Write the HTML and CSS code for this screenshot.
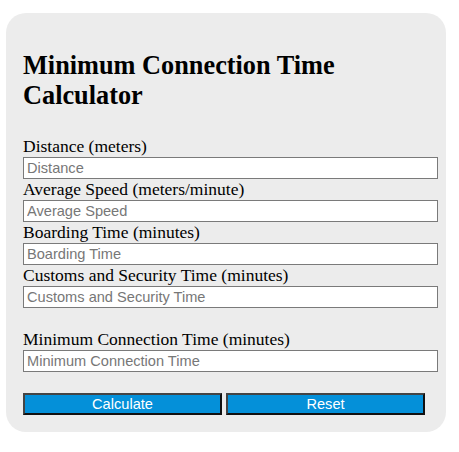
FILE: index.html
```
<!DOCTYPE html>
<html>
<head>
<meta charset="utf-8">
<link rel="stylesheet" href="styles.css">
</head>
<body>
<div class="card">
  <h2 class="title">Minimum Connection Time Calculator</h2>
  <div class="field">
    <label class="label">Distance (meters)</label>
    <input class="input" type="text" placeholder="Distance">
  </div>
  <div class="field">
    <label class="label">Average Speed (meters/minute)</label>
    <input class="input" type="text" placeholder="Average Speed">
  </div>
  <div class="field">
    <label class="label">Boarding Time (minutes)</label>
    <input class="input" type="text" placeholder="Boarding Time">
  </div>
  <div class="field">
    <label class="label">Customs and Security Time (minutes)</label>
    <input class="input" type="text" placeholder="Customs and Security Time">
  </div>
  <div class="field result">
    <label class="label">Minimum Connection Time (minutes)</label>
    <input class="input" type="text" placeholder="Minimum Connection Time">
  </div>
  <div class="buttons">
    <button class="btn">Calculate</button>
    <button class="btn">Reset</button>
  </div>
</div>
</body>
</html>
```
FILE: styles.css
```
html, body {
  margin: 0;
  padding: 0;
  background: #ffffff;
}
body {
  font-family: "Liberation Serif", "Times New Roman", serif;
  color: #000;
}
.card {
  box-sizing: border-box;
  margin: 13px 0 0 6px;
  width: 440px;
  padding: 17px 0 17px 17px;
  background: #ececec;
  border-radius: 20px;
}
.title {
  font-size: 26.3px;
  font-weight: bold;
  line-height: 30px;
  margin: 21px 0 25px 0;
}
.field {
  display: flex;
  flex-direction: column;
}
.result {
  margin-top: 21px;
}
.label {
  font-size: 17.5px;
  line-height: 21px;
  height: 21px;
}
.input {
  box-sizing: border-box;
  width: 415px;
  height: 22px;
  margin: 0;
  padding: 0 3px;
  border: 1px solid #7a7a7a;
  background: #fff;
  font-family: "Liberation Sans", Arial, sans-serif;
  font-size: 14.6px;
  outline: none;
}
.input::placeholder {
  color: #777;
}
.buttons {
  display: flex;
  gap: 4px;
  margin-top: 21px;
}
.btn {
  box-sizing: border-box;
  width: 199px;
  height: 22px;
  margin: 0;
  padding: 0;
  background: #0490d9;
  color: #fff;
  font-family: "Liberation Sans", Arial, sans-serif;
  font-size: 14.6px;
  line-height: 18px;
  border: 2px solid #111;
  border-top-color: #444;
  border-left-color: #444;
}
```
